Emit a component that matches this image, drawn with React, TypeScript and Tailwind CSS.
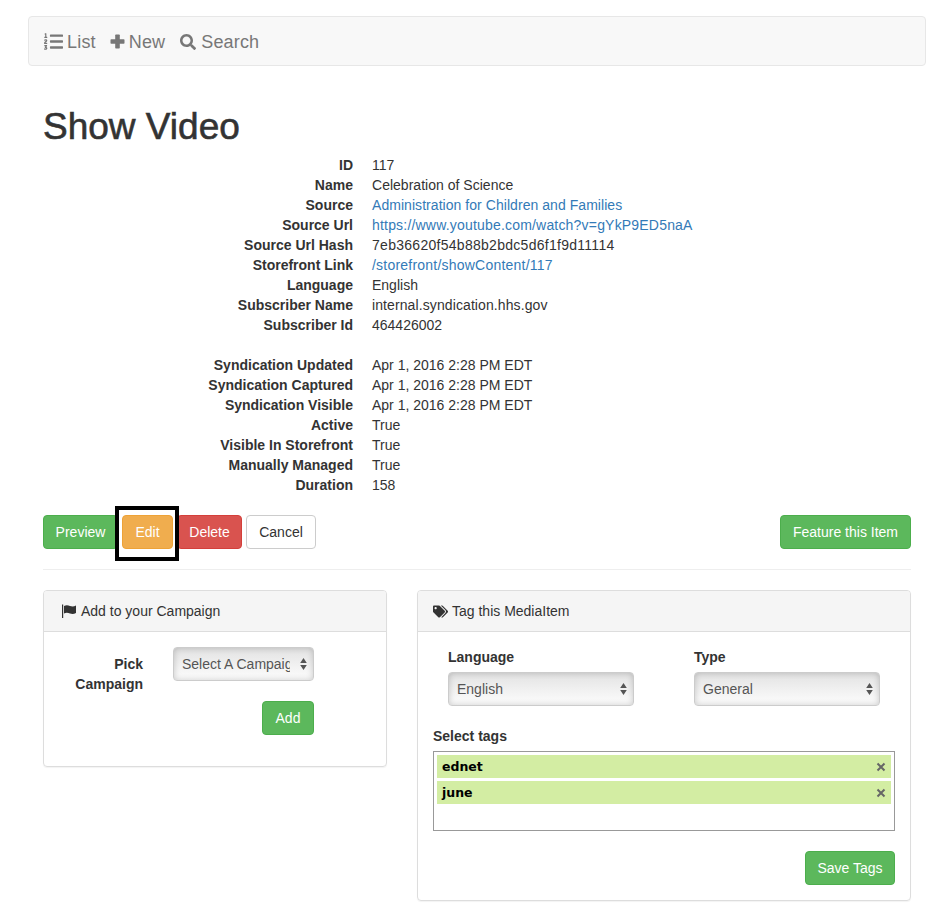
import React from "react";
import { FaListOl, FaSearch, FaTags } from "react-icons/fa";

const rows: [string, string, string?][] = [
  ["ID", "117"],
  ["Name", "Celebration of Science", "tracking-[0.02px]"],
  ["Source", "Administration for Children and Families", "text-[#337ab7] tracking-[0.05px]"],
  ["Source Url", "https://www.youtube.com/watch?v=gYkP9ED5naA", "text-[#337ab7] tracking-[0.19px]"],
  ["Source Url Hash", "7eb36620f54b88b2bdc5d6f1f9d11114", "tracking-[0.28px]"],
  ["Storefront Link", "/storefront/showContent/117", "text-[#337ab7] tracking-[0.22px]"],
  ["Language", "English"],
  ["Subscriber Name", "internal.syndication.hhs.gov", "tracking-[0.1px]"],
  ["Subscriber Id", "464426002"],
  ["", ""],
  ["Syndication Updated", "Apr 1, 2016 2:28 PM EDT"],
  ["Syndication Captured", "Apr 1, 2016 2:28 PM EDT"],
  ["Syndication Visible", "Apr 1, 2016 2:28 PM EDT"],
  ["Active", "True"],
  ["Visible In Storefront", "True"],
  ["Manually Managed", "True"],
  ["Duration", "158"],
];

function Arrows() {
  return (
    <svg width="7" height="12" viewBox="0 0 7 12" className="shrink-0">
      <path d="M3.5 0 L6.8 5 H0.2 Z M3.5 12 L0.2 7 H6.8 Z" fill="#555" />
    </svg>
  );
}

function FakeSelect({ label, className }: { label: string; className: string }) {
  return (
    <div
      className={`h-[34px] flex items-center justify-between pl-2 pr-[6px] rounded-[4px] border border-[#ccc] bg-gradient-to-b from-[#e2e2e2] via-[#f0f0f0] to-[#fdfdfd] shadow-[inset_0_0_6px_rgba(0,0,0,0.2)] text-[#555] ${className}`}
    >
      <span className="overflow-hidden whitespace-nowrap flex-1 min-w-0 mr-[10px]">{label}</span>
      <Arrows />
    </div>
  );
}

function Btn({ children, className }: { children: React.ReactNode; className: string }) {
  return (
    <span className={`h-[34px] flex items-center justify-center rounded-[4px] border whitespace-nowrap ${className}`}>
      {children}
    </span>
  );
}

const green = "bg-[#5cb85c] border-[#4cae4c] text-white";

function Tag({ name }: { name: string }) {
  return (
    <div className="h-[23px] bg-[#d3eda3] flex items-center justify-between pl-[5px] pr-[5px] font-['DejaVu_Sans',sans-serif] font-bold text-[12.5px] text-black">
      <span>{name}</span>
      <svg width="10" height="10" viewBox="0 0 10 10">
        <path d="M1.5 1.5 L8.5 8.5 M8.5 1.5 L1.5 8.5" stroke="#666" strokeWidth="2" />
      </svg>
    </div>
  );
}

export default function App() {
  return (
    <div className="w-[936px] h-[915px] overflow-hidden bg-white pt-4 pl-[28px] pr-[10px] font-['Liberation_Sans',Arial,sans-serif] text-[14px] leading-[20px] text-[#333]">
      <nav className="h-[50px] rounded-[4px] border border-[#e7e7e7] bg-[#f8f8f8] flex items-center pl-[15px] gap-[14px] text-[18px] text-[#777]">
        <span className="flex items-center gap-[4px] pt-[1px] tracking-[0.2px]"><FaListOl size={19} />List</span>
        <span className="flex items-center gap-[4px] pt-[1px] tracking-[0.15px]">
          <svg width="15" height="15" viewBox="0 0 15 15" fill="#777">
            <rect x="5.2" y="0.5" width="4.6" height="14" rx="0.8" />
            <rect x="0.5" y="5.2" width="14" height="4.6" rx="0.8" />
          </svg>
          New
        </span>
        <span className="flex items-center gap-[5px] pt-[1px] tracking-[0.15px] ml-[1px]"><FaSearch size={16} />Search</span>
      </nav>

      <main className="px-[15px]">
        <h1 className="text-[37px] leading-[40px] mt-[41px] mb-[8px] text-[#333] font-normal [-webkit-text-stroke:0.6px_#333]">Show Video</h1>

        <dl className="flex flex-col">
          {rows.map(([k, v, cls], i) => (
            <div key={i} className="flex h-[20px]">
              <dt className="w-[310px] text-right font-bold">{k}</dt>
              <dd className={`ml-[19px] ${cls ?? ""}`}>{v}</dd>
            </div>
          ))}
        </dl>

        <div className="mt-[20px] flex justify-between">
          <div className="relative flex gap-[4px]">
            <Btn className={`w-[75px] ${green}`}>Preview</Btn>
            <Btn className="w-[51px] bg-[#f0ad4e] border-[#eea236] text-white">Edit</Btn>
            <Btn className="w-[65px] bg-[#d9534f] border-[#d43f3a] text-white">Delete</Btn>
            <Btn className="w-[70px] bg-white border-[#ccc] text-[#333]">Cancel</Btn>
            <div className="absolute left-[72px] top-[-9px] w-[64px] h-[55px] border-4 border-black" />
          </div>
          <Btn className={`w-[131px] ${green}`}>Feature this Item</Btn>
        </div>

        <hr className="mt-[20px] mb-[20px] border-0 border-t border-[#eee]" />

        <div className="flex gap-[30px] items-start">
          <section className="w-[344px] h-[177px] rounded-[4px] border border-[#ddd] shadow-[0_1px_1px_rgba(0,0,0,0.05)]">
            <header className="h-[41px] bg-[#f5f5f5] border-b border-[#ddd] rounded-t-[3px] flex items-center pl-[18px] gap-[5px]">
              <svg width="14" height="14" viewBox="0 0 14 14" fill="#333">
                <rect x="0" y="0.5" width="1.2" height="13.5" />
                <path d="M2 2 C4 0.8 6 1 8 2 C10 2.8 12 2.6 14 1.6 V9 C12 10 10 10.2 8 9.4 C6 8.6 4 8.4 2 9.4 Z" />
              </svg>
              Add to your Campaign
            </header>
            <div className="flex pt-[15px] pl-[15px]">
              <div className="w-[84px] mt-[7px] text-right font-bold">Pick Campaign</div>
              <div className="ml-[30px] w-[141px] flex flex-col items-end">
                <FakeSelect label="Select A Campaign" className="w-full" />
                <Btn className={`w-[52px] mt-[20px] ${green}`}>Add</Btn>
              </div>
            </div>
          </section>

          <section className="w-[494px] h-[311px] rounded-[4px] border border-[#ddd] shadow-[0_1px_1px_rgba(0,0,0,0.05)]">
            <header className="h-[41px] bg-[#f5f5f5] border-b border-[#ddd] rounded-t-[3px] flex items-center pl-[15px] gap-[4px]">
              <FaTags size={15} /> Tag this MediaItem
            </header>
            <div className="px-[15px] pt-[15px]">
              <div className="flex pl-[15px] gap-[60px]">
                <div className="w-[186px]">
                  <div className="font-bold mb-[5px]">Language</div>
                  <FakeSelect label="English" className="w-full" />
                </div>
                <div className="w-[186px]">
                  <div className="font-bold mb-[5px]">Type</div>
                  <FakeSelect label="General" className="w-full" />
                </div>
              </div>
              <div className="font-bold mt-[20px] mb-[5px]">Select tags</div>
              <div className="h-[80px] border border-[#999] p-[3px] flex flex-col gap-[3px]">
                <Tag name="ednet" />
                <Tag name="june" />
              </div>
              <div className="flex justify-end mt-[20px]">
                <Btn className={`w-[90px] ${green}`}>Save Tags</Btn>
              </div>
            </div>
          </section>
        </div>
      </main>
    </div>
  );
}
